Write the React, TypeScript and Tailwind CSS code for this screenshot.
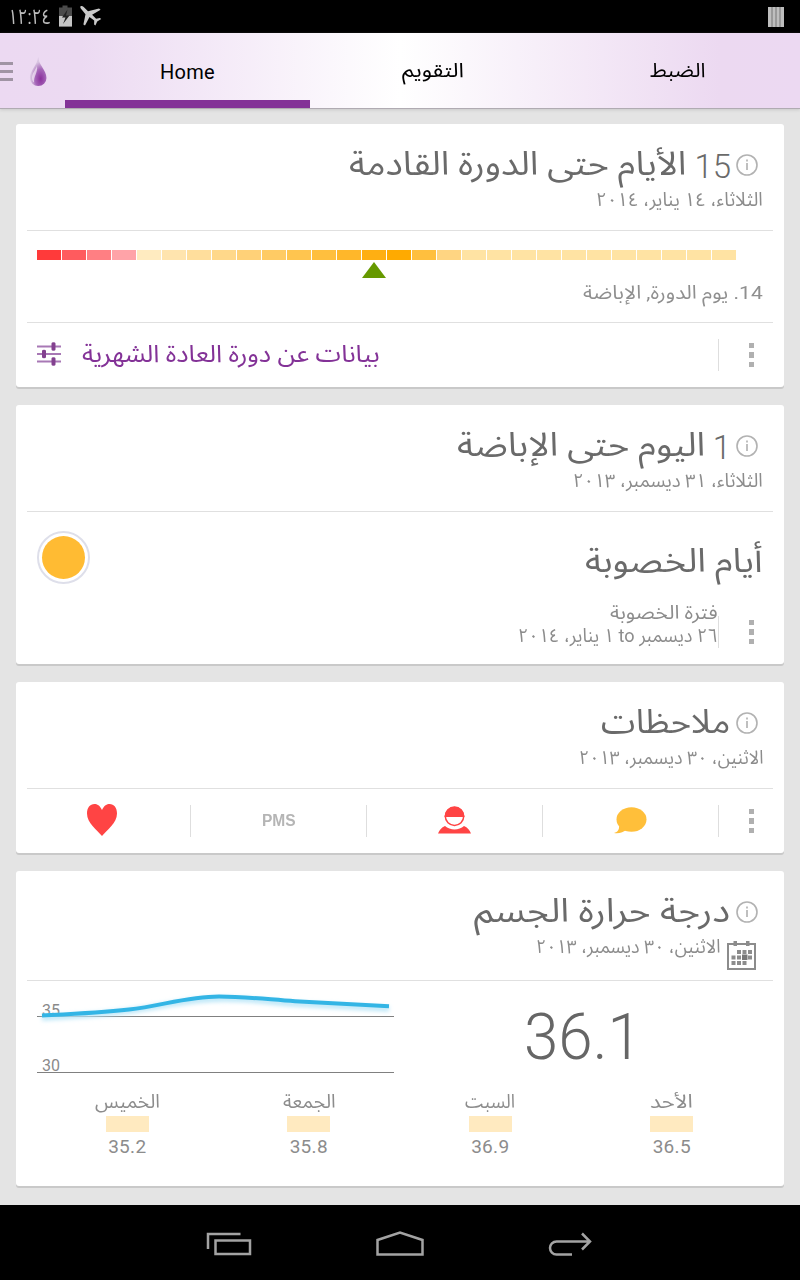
import { useLayoutEffect, useRef, useState } from "react";
import type { ReactNode } from "react";

const CYCLE_COLORS = [
    "#ff3a3a", "#ff5b5e", "#ff7f83", "#ffa3a8", "#ffebc0", "#ffe4ae", "#ffde9c", "#ffd88a", "#ffd178",
    "#ffcb64", "#ffc54f", "#ffbf3e", "#ffb72a", "#ffaf12", "#ffaa00", "#ffbf3e", "#ffd582", "#ffe3a3",
    "#ffe3a3", "#ffe3a3", "#ffe3a3", "#ffe3a3", "#ffe3a3", "#ffe3a3", "#ffe3a3", "#ffe3a3", "#ffe3a3", "#ffe3a3",
];

const DAYS = [
    { name: "الخميس", width: 65, value: "35.2" },
    { name: "الجمعة", width: 53, value: "35.8" },
    { name: "السبت", width: 50, value: "36.9" },
    { name: "الأحد", width: 43, value: "36.5" },
];

// One line of text squeezed or stretched to the given width
function FitText({ width, className, children }: { width: number; className?: string; children: ReactNode }) {
    const ref = useRef<HTMLSpanElement>(null);
    const [scale, setScale] = useState(1);

    useLayoutEffect(() => {
        if (ref.current) {
            setScale(width / ref.current.offsetWidth);
        }
    }, [width]);

    return (
        <div dir="rtl" className={`shrink-0 whitespace-nowrap ${className ?? ""}`} style={{ width }}>
            <span ref={ref} className="inline-block origin-right" style={{ transform: `scaleX(${scale})` }}>
                {children}
            </span>
        </div>
    );
}

function InfoIcon() {
    return (
        <svg width="22" height="22" viewBox="0 0 22 22" fill="none" className="shrink-0">
            <circle cx="11" cy="11" r="10" stroke="#b2b2b2" strokeWidth="1.6" />
            <path d="M11 9v7M11 5.6v1.8" stroke="#b0b0b0" strokeWidth="1.6" />
        </svg>
    );
}

function CalendarIcon() {
    return (
        <svg width="29" height="30" viewBox="0 0 29 30" className="shrink-0">
            <path d="M1 4h27v25H1z" fill="none" stroke="#8c8c8c" strokeWidth="2" />
            <path d="M6.500 1h3.500v5H6.500zM19 1h3.500v5H19z" fill="#8c8c8c" />
            <path
                d="M10 10h4v4h-4zM15.500 10h4v4h-4zM21 10h4v4h-4zM4.500 15.500h4v4h-4zM10 15.500h4v4h-4zM21 15.500h4v4h-4zM4.500 21h4v4h-4zM10 21h4v4h-4zM15.500 21h4v4h-4z"
                fill="#8c8c8c"
            />
            <path d="M15 14.500h5.500v5.500H15z" fill="#777" />
        </svg>
    );
}

function Dots() {
    return (
        <div className="flex w-[65px] shrink-0 items-center justify-center">
            <div className="flex flex-col gap-1">
                <div className="size-[5.5px] bg-[#b0b0b0]" />
                <div className="size-[5.5px] bg-[#b0b0b0]" />
                <div className="size-[5.5px] bg-[#b0b0b0]" />
            </div>
        </div>
    );
}

function Card({ className, children }: { className: string; children: ReactNode }) {
    return (
        <section className={`shrink-0 rounded-[3px] bg-white shadow-[0_2px_0_#c9c9c9] ${className}`}>
            {children}
        </section>
    );
}

type HeaderProps = {
    title: string;
    titleWidth: number;
    count?: string;
    date: string;
    dateWidth: number;
    calendar?: boolean;
};

function CardHeader({ title, titleWidth, count, date, dateWidth, calendar }: HeaderProps) {
    return (
        <div
            dir="rtl"
            className={`mx-[11px] border-b border-[#e0e0e0] pt-[18px] ${calendar ? "h-[110px]" : "h-[107px]"}`}
        >
            <div className="flex h-[46px] items-center pr-[15px]">
                <InfoIcon />
                {count && (
                    <span className="mr-[5px] ml-[8px] pt-[3px] text-[33px] leading-[46px] font-light text-[#6a6a6a]">{count}</span>
                )}
                <FitText width={titleWidth} className={`pb-[2px] text-[33px] leading-[46px] text-[#6a6a6a] ${count ? "" : "mr-[6px]"}`}>
                    {title}
                </FitText>
            </div>
            <div className="flex h-[30px] pr-[10px]">
                {calendar && (
                    <div className="mr-[7px] ml-[7px] pt-[5px]">
                        <CalendarIcon />
                    </div>
                )}
                <FitText width={dateWidth} className="text-[19px] leading-[24px] text-[#8c8c8c]">{date}</FitText>
            </div>
        </div>
    );
}

function StatusBar() {
    return (
        <div className="flex h-[33px] shrink-0 items-center bg-black pr-4 pl-[8px]">
            <FitText width={43} className="text-[21px] leading-[30px] text-[#bdbdbd]">١٢:٢٤</FitText>
            <svg width="15" height="22" viewBox="0 0 15 22" className="mb-[2px] ml-[7px]">
                <path d="M4.500 0.500h5v2h4.500v19H1v-19h3.500z" fill="#4b4b4b" />
                <path d="M1 11h13v10.500H1z" fill="#c4c4c4" />
                <path d="M9.500 4.500L4 12.500h3.500L5 19l6.500-8.500H8z" fill="#222" />
            </svg>
            <svg width="24" height="22" viewBox="0 0 24 22" className="mb-px ml-[6px]">
                <path
                    d="M1.500 1.200c1.300-.5 2.300.1 3.200.9L9 6.200l11-2.700 1.600 1.300-8.500 5 4 4 3.800-.8 1.300 1-4 2.400-1.800 4-1.300-.9.100-4-4.700-3.500L6 20.500l-1.600-1L6.500 9.300 2.600 4.500C1.800 3.500.9 2.400 1.500 1.200z"
                    fill="#cacaca"
                />
            </svg>
            <svg width="16" height="20" viewBox="0 0 16 20" className="ml-auto">
                <path d="M0 0h16v20H0z" fill="#bebebe" />
                <path d="M4 0v20M8 0v20M12 0v20" stroke="#6e6e6e" strokeWidth="0.900" />
            </svg>
        </div>
    );
}

function TabBar() {
    return (
        <nav className="flex h-[75px] shrink-0 bg-[linear-gradient(to_right,#ecd9f2_0%,#ecdaf2_10%,#ffffff_50%,#ecd9f1_90%,#ecd9f2_100%)] shadow-[0_1px_0_#b0abb2,0_2px_3px_#c8c8c8]">
            <div className="flex w-[65px] items-center pt-[2px]">
                <div className="flex w-[13px] flex-col gap-[5px]">
                    <div className="h-[3px] bg-[#a094a4]" />
                    <div className="h-[3px] bg-[#a094a4]" />
                    <div className="h-[3px] bg-[#a094a4]" />
                </div>
                <svg width="18" height="31" viewBox="0 0 18 31" className="ml-[16px]">
                    <defs>
                        <radialGradient id="drop" cx="0.65" cy="0.75" r="0.6">
                            <stop offset="0" stopColor="#8a2f9c" />
                            <stop offset="0.55" stopColor="#a566b8" />
                            <stop offset="1" stopColor="#d9c6e2" />
                        </radialGradient>
                    </defs>
                    <path d="M9.200 1C9.500 9 17.500 14 17.500 22a8.300 8 0 0 1-16.600 0C.900 14 8.500 9 9.200 1z" fill="url(#drop)" />
                    <path d="M8 10C6.500 14 3 17 3 22c0 2 .8 3.500 2 4.500C4.500 20 9 17 8 10z" fill="#f3eaf6" opacity="0.7" />
                </svg>
            </div>
            <div className="flex w-[245px] items-center justify-center border-b-8 border-[#833297] pt-[10px] text-[20px] text-black">
                <span className="tracking-[0.3px]">Home</span>
            </div>
            <div className="flex w-[245px] items-center justify-center pb-[2px]">
                <FitText width={62} className="text-[20px] text-black">التقويم</FitText>
            </div>
            <div className="flex w-[245px] items-center justify-center pb-[2px]">
                <FitText width={55} className="text-[20px] text-black">الضبط</FitText>
            </div>
        </nav>
    );
}

function CycleCard() {
    return (
        <Card className="h-[263px]">
            <CardHeader
                title="الأيام حتى الدورة القادمة" titleWidth={337} count="15"
                date="الثلاثاء، ١٤ يناير، ٢٠١٤" dateWidth={167}
            />
            <div className="mx-[11px] h-[92px] border-b border-[#e0e0e0] pt-[19px] pl-[10px]">
                <div className="grid h-[10px] w-[700px] grid-cols-28">
                    {CYCLE_COLORS.map((color, i) => (
                        <div key={i} className="mr-px" style={{ backgroundColor: color }} />
                    ))}
                </div>
                <svg width="24" height="16" viewBox="0 0 24 16" className="mt-[2px] ml-[325px]">
                    <path d="M12 0l12 16H0z" fill="#669900" />
                </svg>
                <div dir="rtl" className="pr-[10px]">
                    <FitText width={180} className="text-[19px] leading-[29px] text-[#8f8f8f]">
                        14. يوم الدورة, الإباضة
                    </FitText>
                </div>
            </div>
            <div className="flex h-[62px] items-center pl-[21px]">
                <svg width="24" height="26" viewBox="0 0 24 26">
                    <path d="M0 5.500h24M0 13h24M0 20.500h24" stroke="#a878b5" strokeWidth="1.800" />
                    <path
                        d="M14.500 2.500q0-1.200 2-1.200t2 1.200v6q0 1.200-2 1.200t-2-1.200zM5 10q0-1.200 2-1.200T9 10v6q0 1.200-2 1.200T5 16zM14.500 17.500q0-1.200 2-1.200t2 1.200v6q0 1.200-2 1.200t-2-1.200z"
                        fill="#83418f"
                    />
                </svg>
                <FitText width={298} className="ml-[21px] text-[24px] leading-[40px] text-[#833297]">
                    بيانات عن دورة العادة الشهرية
                </FitText>
                <div className="mt-[2px] ml-auto flex h-8 border-l border-[#dedede]">
                    <Dots />
                </div>
            </div>
        </Card>
    );
}

function OvulationCard() {
    return (
        <Card className="h-[259px]">
            <CardHeader
                title="اليوم حتى الإباضة" titleWidth={248} count="1"
                date="الثلاثاء، ٣١ ديسمبر، ٢٠١٣" dateWidth={190}
            />
            <div className="flex h-[91px] items-center justify-between px-[21px]">
                <div className="flex size-[53px] items-center justify-center rounded-full border-2 border-[#dedfea]">
                    <div className="size-[43px] rounded-full bg-[#ffbb33]" />
                </div>
                <FitText width={178} className="pt-[6px] text-[33px] leading-[46px] text-[#6a6a6a]">أيام الخصوبة</FitText>
            </div>
            <div className="flex h-[60px] justify-end">
                <div dir="rtl" className="flex flex-col">
                    <FitText width={108} className="h-[22px] text-[19px] leading-[20px] text-[#8c8c8c]">
                        فترة الخصوبة
                    </FitText>
                    <FitText width={200} className="text-[19px] leading-[22px] text-[#8c8c8c]">
                        ٢٦ ديسمبر to ١ يناير، ٢٠١٤
                    </FitText>
                </div>
                <div className="mt-[13px] flex h-8 border-l border-[#dedede]">
                    <Dots />
                </div>
            </div>
        </Card>
    );
}

function NotesCard() {
    return (
        <Card className="h-[171px]">
            <CardHeader
                title="ملاحظات" titleWidth={129}
                date="الاثنين، ٣٠ ديسمبر، ٢٠١٣" dateWidth={185}
            />
            <div className="flex h-16 items-center">
                <div className="flex h-8 w-[175px] items-center justify-center border-r border-[#dedede] pr-[2px] pb-[2px]">
                    <svg width="30" height="32" viewBox="0 0 30 32" className="shrink-0">
                        <path d="M15 6C17 1.500 20 0 22.500 0 27 0 30 3.800 30 9.500 30 19 20 26 15 32 10 26 0 19 0 9.500 0 3.800 3 0 7.500 0 10 0 13 1.500 15 6z" fill="#ff4444" />
                    </svg>
                </div>
                <div className="flex h-8 w-[176px] items-center justify-center border-r border-[#dedede]">
                    <FitText width={34} className="font-['Liberation_Sans',sans-serif] text-[16px] leading-8 font-bold text-[#b5b5b5]">
                        PMS
                    </FitText>
                </div>
                <div className="flex h-8 w-[176px] items-center justify-center border-r border-[#dedede] pb-[2px]">
                    <svg width="33" height="28" viewBox="0 0 33 28">
                        <circle cx="16.500" cy="10.200" r="9.200" fill="#fff" stroke="#ff4444" strokeWidth="1.500" />
                        <path d="M6.500 11a10 10.200 0 0 1 20 0z" fill="#ff4444" />
                        <path d="M0 27.500c1.500-3.500 3.500-6 7-7.500 5 4.500 14 4.500 19 0 3.500 1.500 5.500 4 7 7.500z" fill="#ff4444" />
                    </svg>
                </div>
                <div className="flex h-8 w-[176px] items-center justify-center border-r border-[#dedede] pb-[2px]">
                    <svg width="33" height="27" viewBox="0 0 33 27">
                        <ellipse cx="17.500" cy="12.500" rx="15" ry="12.200" fill="#ffbf3a" />
                        <path d="M5 19c.5 3-1 6-5 7 5 .8 9-.5 13-3.500z" fill="#ffbf3a" />
                    </svg>
                </div>
                <Dots />
            </div>
        </Card>
    );
}

function TemperatureChart() {
    return (
        <svg width="357" height="104" viewBox="0 0 357 104" fill="none">
            <defs>
                <filter id="glow" x="-5%" y="-50%" width="110%" height="220%">
                    <feGaussianBlur stdDeviation="2" />
                </filter>
            </defs>
            <text x="5" y="34.500" fontSize="16" fill="#8a8a8a">35</text>
            <text x="5" y="90" fontSize="16" fill="#8a8a8a">30</text>
            <path d="M0 35.500h357M0 91.500h357" stroke="#808080" />
            <path
                d="M5 37C35 35.500 60 34 92 30S150 18 187 18c27 0 45 3 71 5l94 5"
                stroke="#b8e5f7" strokeWidth="5" filter="url(#glow)"
            />
            <path d="M5 34.500C35 33 60 32 92 28.500S150 15.500 182 15.500c27 0 50 3 76 4.700l94 5" stroke="#33b5e5" strokeWidth="4" />
        </svg>
    );
}

function TemperatureCard() {
    return (
        <Card className="h-[315px]">
            <CardHeader
                title="درجة حرارة الجسم" titleWidth={256}
                date="الاثنين، ٣٠ ديسمبر، ٢٠١٣" dateWidth={185} calendar
            />
            <div className="flex h-[110px] pl-[21px]">
                <TemperatureChart />
                <div className="flex w-[377px] justify-center pt-[20px]">
                    <FitText width={118} className="text-[64px] leading-[74px] font-light text-[#666]">36.1</FitText>
                </div>
            </div>
            <div className="mr-[21px] ml-[21px] grid grid-cols-4">
                {DAYS.map((day) => (
                    <div key={day.name} className="flex flex-col items-center pr-px">
                        <FitText width={day.width} className="h-[25px] text-[19px] leading-[22px] text-[#8c8c8c]">
                            {day.name}
                        </FitText>
                        <div className="h-4 w-[43px] bg-[#ffeac0]" />
                        <div className="text-[19px] leading-[29px] tracking-[0.300px] text-[#8c8c8c]">{day.value}</div>
                    </div>
                ))}
            </div>
        </Card>
    );
}

function NavigationBar() {
    return (
        <div className="flex h-[75px] shrink-0 items-center justify-center gap-[124px] bg-black pt-[3px]">
            <svg width="46" height="26" viewBox="0 0 46 26" fill="none" stroke="#a3a3a3" strokeWidth="2.500">
                <path d="M2 18V3H34.500M9.500 9.500h34.500v13.500h-34.500z" />
            </svg>
            <svg width="48" height="26" viewBox="0 0 48 26" fill="none" stroke="#a3a3a3" strokeWidth="2.500">
                <path d="M1.500 23.500V9L24 1.500 46.500 9v14.500z" />
            </svg>
            <svg width="46" height="26" viewBox="0 0 46 26" fill="none" stroke="#a3a3a3" strokeWidth="2.500">
                <path d="M24 23.500H8.500a6.500 6.500 0 0 1 0-13H41M34 2.500l8 8-8 8" />
            </svg>
        </div>
    );
}

export default function App() {
    return (
        <div className="flex h-[1280px] w-[800px] flex-col overflow-hidden bg-[#e4e4e4] font-['Roboto','Noto_Sans_Arabic','DejaVu_Sans',sans-serif]">
            <StatusBar />
            <TabBar />
            <main className="flex flex-1 flex-col gap-[18px] px-4 pt-4">
                <CycleCard />
                <OvulationCard />
                <NotesCard />
                <TemperatureCard />
            </main>
            <NavigationBar />
        </div>
    );
}
